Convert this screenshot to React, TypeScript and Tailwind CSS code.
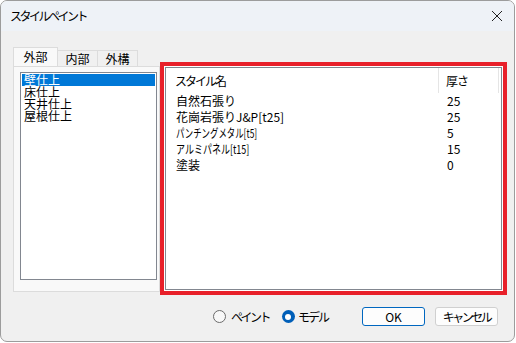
export default function App() {
    const rows = [
        { name: "自然石張り", thick: "25", squeeze: "" },
        { name: "花崗岩張りJ&P[t25]", thick: "25", squeeze: "" },
        { name: "パンチングメタル[t5]", thick: "5", squeeze: "[transform:scaleX(0.7)]" },
        { name: "アルミパネル[t15]", thick: "15", squeeze: "[transform:scaleX(0.75)]" },
        { name: "塗装", thick: "0", squeeze: "" },
    ];
    const finishes = ["壁仕上", "床仕上", "天井仕上", "屋根仕上"];
    const font = { fontFamily: '"Noto Sans CJK JP", "Noto Sans", sans-serif' };

    return (
        <div className="w-[516px] h-[343px] bg-white" style={font}>
            <div className="w-[515px] h-[342px] border border-[#9c9c9c] rounded-[7px] overflow-hidden bg-[#f0f0f0] flex flex-col text-black">
                {/* title bar */}
                <div className="h-[30px] bg-[#eef2f7] flex items-center justify-between pl-[9px] pr-[8px] shrink-0">
                    <span className="text-[12px] tracking-[-2.5px]">スタイルペイント</span>
                    <svg className="w-[12px] h-[12px] mr-[3px]" viewBox="0 0 12 12" fill="none" stroke="#222" strokeWidth={1}>
                        <path d="M1 1L11 11M11 1L1 11" />
                    </svg>
                </div>

                <div className="flex items-start pl-[12px] pt-[16px]">
                    {/* left tab column */}
                    <div className="w-[147px] flex flex-col">
                        <div className="flex items-end h-[19px] text-[12px]">
                            <div className="w-[45px] h-[19px] bg-[#f9f9f9] border border-b-0 border-[#dcdcdc] flex items-center justify-center">外部</div>
                            <div className="w-[40px] h-[16px] bg-[#f0f0f0] border border-b-0 border-l-0 border-[#dcdcdc] flex items-center justify-center">内部</div>
                            <div className="w-[40px] h-[16px] bg-[#f0f0f0] border border-b-0 border-l-0 border-[#dcdcdc] flex items-center justify-center">外構</div>
                        </div>
                        <div className="h-[226px] bg-[#f9f9f9] border border-[#dcdcdc] pl-[6px] pt-[5px]">
                            <div className="w-[137px] h-[208px] bg-white border border-[#828790] p-[1px] text-[12px] leading-[12px]">
                                {finishes.map((f, i) => (
                                    <div
                                        key={i}
                                        className={`h-[12px] pl-[2px] ${i === 0 ? "bg-[#0078d7] text-white" : ""}`}
                                    >
                                        {f}
                                    </div>
                                ))}
                            </div>
                        </div>
                    </div>

                    {/* highlighted list view */}
                    <div className="mt-[15px] w-[347px] h-[233px] border-4 border-[#e8202a] bg-white p-[1px]">
                        <div className="w-full h-full border border-[#828790] flex flex-col text-[12px]">
                            <div className="h-[25px] flex items-center shrink-0">
                                <div className="w-[273px] h-full flex items-center pl-[9px] border-r border-[#e5e5e5] tracking-[-2px]">スタイル名</div>
                                <div className="w-[60px] h-full flex items-center pl-[7px] border-r border-[#e5e5e5] tracking-[-1px]">厚さ</div>
                            </div>
                            {rows.map((r, i) => (
                                <div key={i} className="h-[16px] flex items-center">
                                    <div className="w-[273px] pl-[10px] whitespace-nowrap">
                                        <span className={`inline-block origin-left ${r.squeeze}`}>{r.name}</span>
                                    </div>
                                    <div className="pl-[8px]">{r.thick}</div>
                                </div>
                            ))}
                        </div>
                    </div>
                </div>

                {/* bottom controls */}
                <div className="flex items-center justify-end mt-[12px] pr-[16px] text-[12px]">
                    <label className="flex items-center gap-[5px]">
                        <span className="w-[13px] h-[13px] rounded-full border border-[#6b6b6b] bg-[#f8f8f8]" />
                        <span className="tracking-[-2.5px]">ペイント</span>
                    </label>
                    <label className="flex items-center gap-[3px] ml-[13px]">
                        <span className="w-[13px] h-[13px] rounded-full bg-[#005fb8] flex items-center justify-center">
                            <span className="w-[6px] h-[6px] rounded-full bg-white" />
                        </span>
                        <span className="tracking-[-2px]">モデル</span>
                    </label>
                    <button className="ml-[34px] w-[63px] h-[19px] rounded-[3px] border border-[#0067c0] bg-[#fdfdfd] text-[12px] flex items-center justify-center">
                        OK
                    </button>
                    <button className="ml-[10px] w-[63px] h-[19px] rounded-[3px] border border-[#d0d0d0] bg-[#fdfdfd] text-[12px] tracking-[-2.5px] flex items-center justify-center">
                        キャンセル
                    </button>
                </div>
            </div>
        </div>
    );
}
